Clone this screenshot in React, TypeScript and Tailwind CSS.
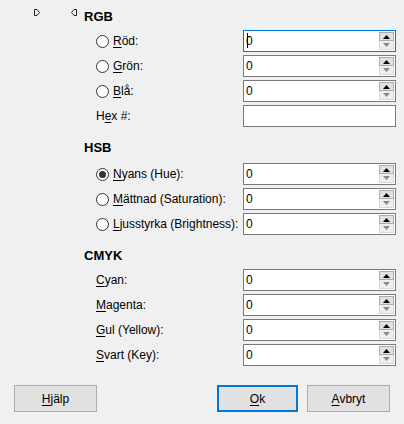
import React from 'react';

type Row = { label: string; key: string; rest: string; radio?: boolean; checked?: boolean; focused?: boolean; spin?: boolean };

const rgb: Row[] = [
  { key: 'R', rest: 'öd:', label: 'Röd', radio: true, focused: true, spin: true },
  { key: 'G', rest: 'rön:', label: 'Grön', radio: true, spin: true },
  { key: 'B', rest: 'lå:', label: 'Blå', radio: true, spin: true },
];

const hsb: Row[] = [
  { key: 'N', rest: 'yans (Hue):', label: 'Nyans', radio: true, checked: true, spin: true },
  { key: 'M', rest: 'ättnad (Saturation):', label: 'Mättnad', radio: true, spin: true },
  { key: 'L', rest: 'jusstyrka (Brightness):', label: 'Ljusstyrka', radio: true, spin: true },
];

const cmyk: Row[] = [
  { key: 'C', rest: 'yan:', label: 'Cyan', spin: true },
  { key: 'M', rest: 'agenta:', label: 'Magenta', spin: true },
  { key: 'G', rest: 'ul (Yellow):', label: 'Gul', spin: true },
  { key: 'S', rest: 'vart (Key):', label: 'Svart', spin: true },
];

function Radio({ checked }: { checked?: boolean }) {
  return (
    <span className="w-[13px] h-[13px] rounded-full border border-[#333] bg-white flex items-center justify-center mr-[4px]">
      {checked && <span className="w-[7px] h-[7px] rounded-full bg-[#333]" />}
    </span>
  );
}

function Spin() {
  return (
    <div className="flex flex-col h-[18px] w-[15px] mr-[1px]">
      <div className="h-[9px] border border-[#adadad] bg-[#e1e1e1] flex items-center justify-center">
        <svg width="7" height="4" viewBox="0 0 7 4"><path d="M0 4 L3.5 0 L7 4 Z" fill="#000" /></svg>
      </div>
      <div className="h-[9px] border border-[#d9d9d9] border-t-0 bg-[#eeeeee] flex items-center justify-center">
        <svg width="7" height="4" viewBox="0 0 7 4"><path d="M0 0 L3.5 4 L7 0 Z" fill="#8a8a8a" /></svg>
      </div>
    </div>
  );
}

function Field({ row }: { row: Row }) {
  return (
    <div className="flex items-center h-[22px]">
      <div className="w-[159px] pl-[12px] flex items-center">
        {row.radio ? <Radio checked={row.checked} /> : null}
        <span>
          <span className="underline underline-offset-2">{row.key}</span>
          {row.rest}
        </span>
      </div>
      <div
        className={`w-[153px] h-[22px] bg-white flex items-center justify-between pl-[2px] border ${
          row.focused ? 'border-[#0078d7]' : 'border-[#7a7a7a]'
        }`}
      >
        <span className="relative">
          0
          {row.focused && <span className="absolute left-[1px] top-[1px] w-[1px] h-[15px] bg-black" />}
        </span>
        {row.spin && <Spin />}
      </div>
    </div>
  );
}

function Heading({ children, className }: { children: React.ReactNode; className: string }) {
  return <h3 className={`font-bold text-[13px] h-[16px] leading-[16px] ${className}`}>{children}</h3>;
}

export default function App() {
  return (
    <div
      className="w-[404px] h-[424px] bg-[#f0f0f0] text-[12px] text-black flex flex-col"
      style={{ fontFamily: '"Segoe UI", "Liberation Sans", Arial, sans-serif' }}
    >
      <div className="flex">
        <div className="w-[84px] flex pl-[34px] pt-[9px] gap-[31px]">
          <svg width="6" height="7" viewBox="0 0 6 7">
            <path d="M0.5 0.5 H3 L5.5 3.5 L3 6.5 H0.5 Z" fill="none" stroke="#222" />
          </svg>
          <svg width="6" height="7" viewBox="0 0 6 7">
            <path d="M5.5 0.5 H3 L0.5 3.5 L3 6.5 H5.5 Z" fill="none" stroke="#222" />
          </svg>
        </div>
        <div className="w-[312px] flex flex-col">
          <Heading className="mt-[9px]">RGB</Heading>
          <div className="flex flex-col gap-[3px] mt-[5px]">
            {rgb.map((r) => (
              <Field key={r.label} row={r} />
            ))}
            <div className="flex items-center h-[22px]">
              <div className="w-[159px] pl-[12px]">
                H<span className="underline underline-offset-2">e</span>x #:
              </div>
              <div className="w-[153px] h-[22px] bg-white border border-[#7a7a7a]" />
            </div>
          </div>

          <Heading className="mt-[13px]">HSB</Heading>
          <div className="flex flex-col gap-[3px] mt-[7px]">
            {hsb.map((r) => (
              <Field key={r.label} row={r} />
            ))}
          </div>

          <Heading className="mt-[13px]">CMYK</Heading>
          <div className="flex flex-col gap-[3px] mt-[5px]">
            {cmyk.map((r) => (
              <Field key={r.label} row={r} />
            ))}
          </div>
        </div>
      </div>

      <div className="flex mt-[19px] pl-[14px]">
        <button className="w-[83px] h-[27px] bg-[#e1e1e1] border border-[#adadad]">
          <span className="underline underline-offset-2">H</span>jälp
        </button>
        <button className="w-[81px] h-[27px] bg-[#e1e1e1] border-2 border-[#0078d7] ml-[120px]">
          <span className="underline underline-offset-2">O</span>k
        </button>
        <button className="w-[83px] h-[27px] bg-[#e1e1e1] border border-[#adadad] ml-[9px]">
          <span className="underline underline-offset-2">A</span>vbryt
        </button>
      </div>
    </div>
  );
}
